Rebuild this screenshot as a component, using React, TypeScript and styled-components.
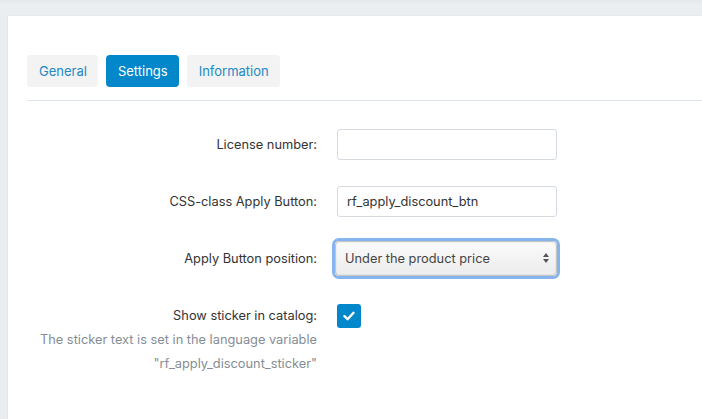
import React, { useState } from 'react';
import styled, { createGlobalStyle } from 'styled-components';

const GlobalStyle = createGlobalStyle`
  html, body {
    margin: 0;
    padding: 0;
    height: 100%;
    background: #ebeef1;
  }
  body {
    font-family: Inter, "Liberation Sans", Arial, sans-serif;
    font-size: 12.8px;
    color: #333;
    overflow: hidden;
  }
  #root {
    min-height: 100%;
  }
`;

const Page = styled.div`
  min-height: 419px;
  padding: 15px 0 0 7px;
  box-sizing: border-box;
  background: linear-gradient(#e3e6ea 0, #ebeef1 4px);
  display: flex;
`;

const Card = styled.div`
  flex: 1;
  background: #fff;
  border-left: 1px solid #e2e6ea;
  border-top: 1px solid #e6e9ec;
  padding: 39px 0 0 19px;
`;

const TabBar = styled.div`
  display: flex;
  gap: 8px;
  padding-bottom: 13px;
  border-bottom: 1px solid #dde4eb;
`;

const Tab = styled.button<{ $active?: boolean }>`
  height: 32px;
  padding: 0 11px 0 12px;
  border: 0;
  border-radius: 4px;
  font-family: inherit;
  font-size: 13px;
  cursor: pointer;
  background: ${(p) => (p.$active ? '#0287cb' : '#f3f3f3')};
  color: ${(p) => (p.$active ? '#fff' : '#2189c8')};
`;

const Form = styled.div`
  padding-top: 15px;
`;

const Row = styled.div<{ $top?: boolean }>`
  display: flex;
  align-items: ${(p) => (p.$top ? 'flex-start' : 'center')};
  height: ${(p) => (p.$top ? 'auto' : '57px')};
  padding-top: ${(p) => (p.$top ? '17px' : '0')};
  gap: 20px;
`;

const Label = styled.div`
  width: 290px;
  text-align: right;
  line-height: 24px;
  color: #333;
`;

const Help = styled.div`
  color: #858d95;
  line-height: 24px;
`;

const TextInput = styled.input`
  width: 220px;
  height: 31px;
  box-sizing: border-box;
  border: 1px solid #d4dae0;
  border-radius: 3px;
  padding: 0 9px;
  font-family: inherit;
  font-size: 12.8px;
  color: #333;
  outline: none;
`;

const SelectRing = styled.div`
  width: 228px;
  height: 41px;
  box-sizing: border-box;
  margin-left: -5px;
  margin-top: -1px;
  border: 3px solid #86b4ee;
  border-radius: 7px;
  display: flex;
`;

const SelectBox = styled.div`
  flex: 1;
  border: 1px solid #c4c4c4;
  border-radius: 4px;
  background: linear-gradient(#fbfbfb, #ececec);
  box-shadow: inset 0 0 2px rgba(0, 0, 0, 0.12);
  display: flex;
  align-items: center;
  justify-content: space-between;
  padding: 0 6px 0 9px;
  color: #444;
`;

const CheckBox = styled.button`
  width: 24px;
  height: 24px;
  border: 0;
  border-radius: 3px;
  background: #0287cb;
  display: flex;
  align-items: center;
  justify-content: center;
  padding: 0;
  cursor: pointer;
`;

const Arrows = () => (
  <svg width="8" height="12" viewBox="0 0 8 12">
    <path d="M4 1 L7 5 H1 Z" fill="#555" />
    <path d="M4 11 L7 7 H1 Z" fill="#555" />
  </svg>
);

const Check = () => (
  <svg width="12" height="10" viewBox="0 0 12 10">
    <path d="M1.5 5.2 L4.6 8.2 L10.5 1.8" fill="none" stroke="#fff" strokeWidth="2.4" strokeLinecap="round" strokeLinejoin="round" />
  </svg>
);

export default function App() {
  const [tab, setTab] = useState('Settings');
  const [checked, setChecked] = useState(true);

  return (
    <>
      <GlobalStyle />
      <Page>
        <Card>
          <TabBar>
            {['General', 'Settings', 'Information'].map((t) => (
              <Tab key={t} $active={tab === t} onClick={() => setTab(t)}>{t}</Tab>
            ))}
          </TabBar>
          <Form>
            <Row>
              <Label>License number:</Label>
              <TextInput />
            </Row>
            <Row>
              <Label>CSS-class Apply Button:</Label>
              <TextInput defaultValue="rf_apply_discount_btn" />
            </Row>
            <Row>
              <Label>Apply Button position:</Label>
              <SelectRing>
                <SelectBox>
                  <span>Under the product price</span>
                  <Arrows />
                </SelectBox>
              </SelectRing>
            </Row>
            <Row $top>
              <Label>
                Show sticker in catalog:
                <Help>
                  The sticker text is set in the language variable
                  <br />
                  "rf_apply_discount_sticker"
                </Help>
              </Label>
              <CheckBox onClick={() => setChecked(!checked)}>
                {checked && <Check />}
              </CheckBox>
            </Row>
          </Form>
        </Card>
      </Page>
    </>
  );
}
